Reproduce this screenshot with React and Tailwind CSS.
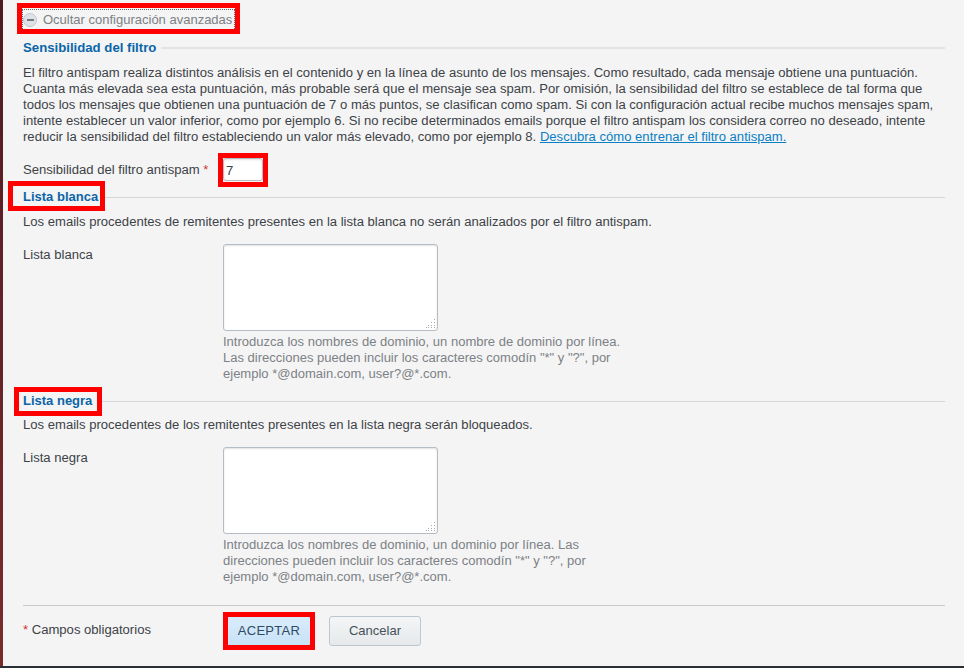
const inputBorder = 'border border-[#b5bcc4] rounded-[3px] bg-white shadow-[inset_0_1px_2px_rgba(0,0,0,0.12)]'

function Redbox({ className }) {
  return <span className={`absolute border-[5px] border-[#ff0000] pointer-events-none ${className}`} />
}

function Legend({ title, boxed, className = '', size = 'text-[13px]', line = 'h-px bg-[#d5d8db]' }) {
  return (
    <div className={`flex items-center ${className}`}>
      <span className={`relative leading-4 font-bold text-[#0b65a8] ${size}`}>
        {title}
        {boxed}
      </span>
      <div className={`flex-1 ml-[5px] ${line}`} />
    </div>
  )
}

function Grip() {
  return (
    <svg className="absolute right-[1px] bottom-[1px]" width="11" height="11" viewBox="0 0 11 11">
      <g fill="#a9adb2">
        <rect x="9" y="1" width="1" height="1" />
        <rect x="9" y="4" width="1" height="1" />
        <rect x="6" y="4" width="1" height="1" />
        <rect x="9" y="7" width="1" height="1" />
        <rect x="6" y="7" width="1" height="1" />
        <rect x="3" y="7" width="1" height="1" />
        <rect x="9" y="9" width="1" height="1" />
        <rect x="6" y="9" width="1" height="1" />
        <rect x="3" y="9" width="1" height="1" />
        <rect x="1" y="9" width="1" height="1" />
      </g>
    </svg>
  )
}

function ListField({ label, hint }) {
  return (
    <div className="flex mt-[14px]">
      <div className="w-[200px] pt-[3px] leading-4 text-[#3d4247]">{label}</div>
      <div>
        <div className={`relative w-[215px] h-[87px] ${inputBorder}`}>
          <Grip />
        </div>
        <p className="mt-[3px] w-[410px] text-[13.03px] leading-4 text-[#7c8186]">{hint}</p>
      </div>
    </div>
  )
}

function App() {
  return (
    <div className="w-[964px] h-[668px] overflow-hidden flex flex-col bg-[#f4f4f4] text-[13.09px] font-['Liberation_Sans',Arial,sans-serif]">
      <div className="flex flex-1 min-h-0">
        <div className="w-[3px] bg-gradient-to-b from-[#4f1a22] to-[#7a2c2c]" />
        <main className="flex-1 pl-[20px] pr-[19px]">
          {/* Toggle */}
          <div className="pt-[9px] h-[40px]">
            <button className="relative flex items-center w-[213px] h-[22px] ml-[-1px] outline-1 -outline-offset-1 outline-dotted outline-[#666] text-[13px] leading-4 text-[#7c8186]">
              <span className="flex items-center justify-center w-[14px] h-[14px] ml-[1px] mr-[6px] rounded-full bg-[#dfe3e7] border border-[#c2c8ce]">
                <span className="w-[7px] h-[2px] bg-[#767c82]" />
              </span>
              Ocultar configuración avanzadas
              <Redbox className="-left-[5px] -right-[5px] -top-[6px] -bottom-[3px]" />
            </button>
          </div>

          <Legend title="Sensibilidad del filtro" size="text-[13.2px]" line="h-[2px] bg-[#e2e3e4]" />
          <p className="mt-[9px] leading-4 text-[#3d4247]">
            El filtro antispam realiza distintos análisis en el contenido y en la línea de asunto de los mensajes. Como resultado, cada mensaje obtiene una puntuación. Cuanta más elevada sea esta puntuación, más probable será que el mensaje sea spam. Por omisión, la sensibilidad del filtro se establece de tal forma que todos los mensajes que obtienen una puntuación de 7 o más puntos, se clasifican como spam. Si con la configuración actual recibe muchos mensajes spam, intente establecer un valor inferior, como por ejemplo 6. Si no recibe determinados emails porque el filtro antispam los considera correo no deseado, intente reducir la sensibilidad del filtro estableciendo un valor más elevado, como por ejemplo 8.{' '}
            <a className="text-[#0a7fc4] underline">Descubra cómo entrenar el filtro antispam.</a>
          </p>

          <div className="flex items-center mt-[12px] h-[25px]">
            <label className="w-[200px] leading-4 text-[#3d4247]">
              Sensibilidad del filtro antispam <span className="text-[#d0342c]">*</span>
            </label>
            <div className={`relative w-[40px] h-[23px] pl-[2px] leading-[23px] text-[#3d4247] ${inputBorder}`}>
              7
              <Redbox className="-left-[6px] -right-[6px] -top-[6px] -bottom-[7px]" />
            </div>
          </div>

          <Legend
            className="mt-[7px]"
            title="Lista blanca"
            boxed={<Redbox className="-left-[15px] -right-[7px] -top-[8px] -bottom-[6px]" />}
          />
          <p className="mt-[9px] leading-4 text-[#3d4247]">
            Los emails procedentes de remitentes presentes en la lista blanca no serán analizados por el filtro antispam.
          </p>
          <ListField
            label="Lista blanca"
            hint={<>Introduzca los nombres de dominio, un nombre de dominio por línea.<br />Las direcciones pueden incluir los caracteres comodín "*" y "?", por<br />ejemplo *@domain.com, user?@*.com.</>}
          />

          <Legend
            className="mt-[11px]"
            title="Lista negra"
            boxed={<Redbox className="-left-[9px] -right-[10px] -top-[6px] -bottom-[7px]" />}
          />
          <p className="mt-[8px] leading-4 text-[#3d4247]">
            Los emails procedentes de los remitentes presentes en la lista negra serán bloqueados.
          </p>
          <ListField
            label="Lista negra"
            hint={<>Introduzca los nombres de dominio, un dominio por línea. Las<br />direcciones pueden incluir los caracteres comodín "*" y "?", por<br />ejemplo *@domain.com, user?@*.com.</>}
          />

          {/* Footer */}
          <div className="mt-[20px] h-px bg-[#c8c9ca]" />
          <div className="flex mt-[10px]">
            <div className="w-[204px] pt-[6px] leading-4 text-[#3d4247]">
              <span className="text-[#d0342c]">*</span> Campos obligatorios
            </div>
            <button className="relative w-[84px] h-[30px] rounded-[3px] border border-[#a9c3d8] bg-gradient-to-b from-[#d9ecfb] to-[#c8e2f7] text-[13px] tracking-[0.3px] text-[#2f4a62]">
              ACEPTAR
              <Redbox className="border-[4px] -left-[5px] -right-[5px] -top-[5px] -bottom-[5px]" />
            </button>
            <button className="w-[92px] h-[30px] ml-[18px] rounded-[3px] border border-[#bcc7d0] bg-gradient-to-b from-[#f3f5f6] to-[#e6e9eb] text-[13px] text-[#46505a]">
              Cancelar
            </button>
          </div>
        </main>
      </div>
      <div className="h-[2px] bg-[#2b2f36]" />
    </div>
  )
}

export default App
